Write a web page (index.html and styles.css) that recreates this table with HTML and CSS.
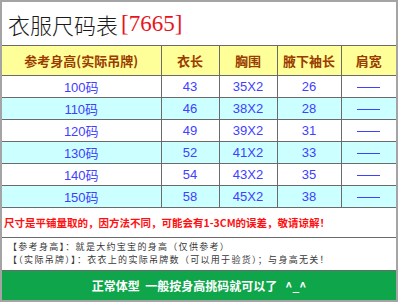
FILE: index.html
```html
<!DOCTYPE html>
<html lang="zh-CN">
<head>
<meta charset="utf-8">
<title>衣服尺码表</title>
<link rel="stylesheet" href="styles.css">
</head>
<body>
<table class="size-table">
  <colgroup>
    <col class="c1"><col class="c2"><col class="c3"><col class="c4"><col class="c5">
  </colgroup>
  <tr class="title-row">
    <td colspan="5" class="title"><span class="title-cn">衣服尺码表</span><span class="title-num">[7665]</span></td>
  </tr>
  <tr class="head-row">
    <th>参考身高(实际吊牌)</th>
    <th>衣长</th>
    <th>胸围</th>
    <th>腋下袖长</th>
    <th>肩宽</th>
  </tr>
  <tr class="data-row white">
    <td>100码</td><td>43</td><td>35X2</td><td>26</td><td><span class="dash"></span></td>
  </tr>
  <tr class="data-row cyan">
    <td>110码</td><td>46</td><td>38X2</td><td>28</td><td><span class="dash"></span></td>
  </tr>
  <tr class="data-row white">
    <td>120码</td><td>49</td><td>39X2</td><td>31</td><td><span class="dash"></span></td>
  </tr>
  <tr class="data-row cyan">
    <td>130码</td><td>52</td><td>41X2</td><td>33</td><td><span class="dash"></span></td>
  </tr>
  <tr class="data-row white">
    <td>140码</td><td>54</td><td>43X2</td><td>35</td><td><span class="dash"></span></td>
  </tr>
  <tr class="data-row cyan">
    <td>150码</td><td>58</td><td>45X2</td><td>38</td><td><span class="dash"></span></td>
  </tr>
  <tr class="warn-row">
    <td colspan="5" class="warn">尺寸是平铺量取的，因方法不同，可能会有1-3CM的误差，敬请谅解！</td>
  </tr>
  <tr class="note-row">
    <td colspan="5" class="note">
      <div class="note-line">【参考身高】：就是大约宝宝的身高（仅供参考）</div>
      <div class="note-line">【（实际吊牌）】：衣衣上的实际吊牌数（可以用于验货）；与身高无关！</div>
    </td>
  </tr>
  <tr class="foot-row">
    <td colspan="5" class="foot">正常体型&nbsp;&nbsp;一般按身高挑码就可以了&nbsp;&nbsp;&nbsp;^_^</td>
  </tr>
</table>
</body>
</html>
```
FILE: styles.css
```css
html, body {
  margin: 0;
  padding: 0;
  background: #ffffff;
}

.size-table {
  border-collapse: collapse;
  width: 398px;
  table-layout: fixed;
  border: 2px solid #a4a4a4;
  font-family: "Liberation Sans", "Noto Sans CJK SC", sans-serif;
}

.c1 { width: 160px; }
.c2 { width: 58px; }
.c3 { width: 58px; }
.c4 { width: 64px; }
.c5 { width: 56px; }

.size-table td,
.size-table th {
  border: 1px solid #6a6a6a;
  padding: 0;
  text-align: center;
  vertical-align: middle;
}

.title-row td {
  height: 43px;
  text-align: left;
  padding-left: 6px;
  background: #ffffff;
}

.title-cn {
  font-family: "Noto Sans CJK SC", sans-serif;
  font-size: 22px;
  color: #1a1a1a;
  font-weight: 300;
  vertical-align: middle;
}

.title-num {
  font-family: "Liberation Serif", serif;
  font-size: 23px;
  color: #e8141c;
  margin-left: 3px;
  vertical-align: middle;
}

.head-row th {
  height: 29px;
  background: #ffff99;
  color: #9a3b00;
  font-family: "Noto Sans CJK SC", sans-serif;
  font-size: 13px;
  font-weight: 700;
}

.data-row td {
  height: 21px;
  font-size: 13px;
  color: #4040ff;
}

.data-row.white td { background: #ffffff; }
.data-row.cyan td { background: #ccffff; }

.dash {
  display: inline-block;
  width: 23px;
  height: 1px;
  background: #4040ff;
  vertical-align: middle;
}

.warn-row td {
  height: 29px;
  text-align: left;
  padding-left: 2px;
  color: #ff1010;
  font-family: "Noto Sans CJK SC", sans-serif;
  font-weight: 700;
  font-size: 10.5px;
  background: #ffffff;
}

.note-row td {
  height: 30px;
  text-align: left;
  padding: 0 0 2px 6px;
  color: #383838;
  font-family: "Noto Sans CJK SC", sans-serif;
  font-size: 9px;
  letter-spacing: 1.3px;
  line-height: 13px;
  background: #ffffff;
}

.foot-row td {
  height: 29px;
  background: #0fa64b;
  color: #ffffff;
  font-family: "Noto Sans CJK SC", sans-serif;
  font-weight: 700;
  font-size: 12px;
}
```
